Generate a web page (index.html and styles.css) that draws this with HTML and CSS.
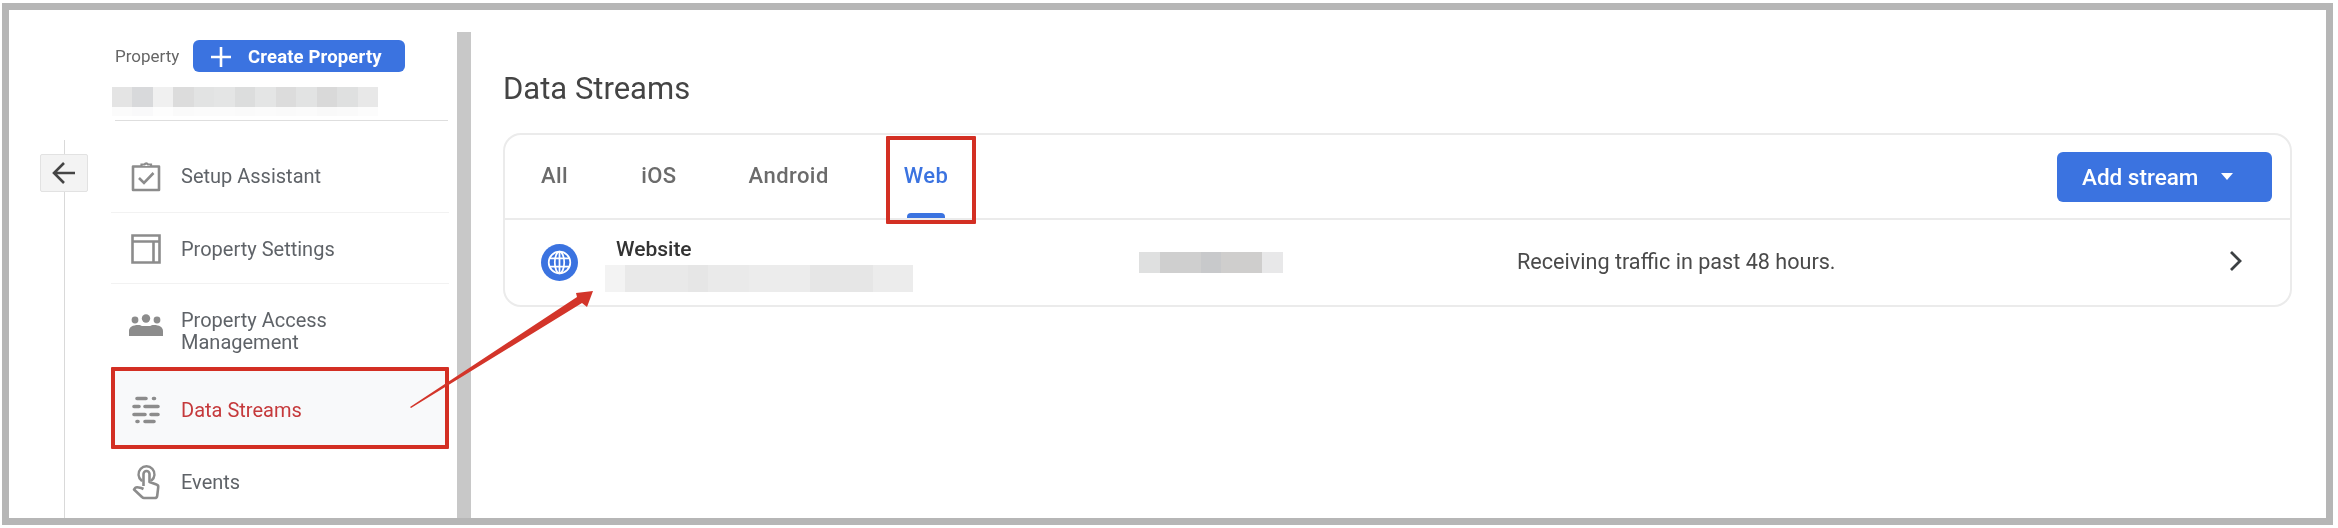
FILE: index.html
```html
<!DOCTYPE html>
<html lang="en">
<head>
<meta charset="utf-8">
<title>Data Streams</title>
<link rel="stylesheet" href="styles.css">
</head>
<body>
<div class="frame">
  <div class="rail">
    <div class="rail-line rail-line-top"></div>
    <button class="back" aria-label="Back">
      <svg viewBox="0 0 26 26" width="26" height="26"><path d="M24 13H3M13 3 3 13l10 10" fill="none" stroke="#444" stroke-width="2.6"/></svg>
    </button>
    <div class="rail-line rail-line-rest"></div>
  </div>
  <aside class="sidebar">
    <div class="prop-head">
      <span class="prop-label">Property</span>
      <button class="create">
        <svg viewBox="0 0 20 20" width="20" height="20"><path d="M10 0v20M0 10h20" stroke="#fff" stroke-width="2.6"/></svg>
        <span>Create Property</span>
      </button>
    </div>
    <div class="mosaic-name"></div>
    <div class="prop-rule"></div>
    <nav class="nav">
      <a class="row row-setup">
        <span class="ico"><svg viewBox="0 0 30 32" width="30" height="32"><path d="M2 6.5h26v23.500H2z" fill="none" stroke="#8c8c8c" stroke-width="2.600" stroke-linejoin="round"/><path d="M10.500 6V4.500h3a2 2 0 0 1 3.500 0h3V6" fill="#fff" stroke="#8c8c8c" stroke-width="2.200"/><path d="m8 18 5 5 9.500-10" fill="none" stroke="#8c8c8c" stroke-width="2.600"/></svg></span>
        <span class="label">Setup Assistant</span>
      </a>
      <a class="row row-settings">
        <span class="ico"><svg viewBox="0 0 30 30" width="30" height="30"><path d="M1.500 1.500h27v27h-27zM1.500 7.500h27M22.500 7.500v21" fill="none" stroke="#8c8c8c" stroke-width="2.600"/></svg></span>
        <span class="label">Property Settings</span>
      </a>
      <a class="row row-access">
        <span class="ico"><svg viewBox="0 0 36 24" width="36" height="24"><circle cx="7" cy="7" r="3.400" fill="#8c8c8c"/><circle cx="18" cy="5.500" r="4.200" fill="#8c8c8c"/><circle cx="29" cy="7" r="3.400" fill="#8c8c8c"/><path d="M1 23v-5c0-4 4-6 9-6 2 0 3 .5 4 1h8c1-.5 2-1 4-1 5 0 9 2 9 6v5z" fill="#8c8c8c"/></svg></span>
        <span class="label">Property Access<br>Management</span>
      </a>
      <a class="row row-streams">
        <span class="ico"><svg viewBox="0 0 30 30" width="30" height="30"><path d="M6 3.500h9M22.500 3.500h1M3 11.500h5M14 11.500h13M3 19.500h11M20 19.500h7M6 26.500h1M14 26.500h9" fill="none" stroke="#8c8c8c" stroke-width="3.600" stroke-linecap="round"/></svg></span>
        <span class="label">Data Streams</span>
      </a>
      <a class="row row-events">
        <span class="ico"><svg viewBox="0 0 30 36" width="30" height="36"><path d="M10.500 16.500a8 8 0 1 1 10 0" fill="none" stroke="#8c8c8c" stroke-width="2.400" stroke-linecap="round"/><path d="M12.500 22V10a3 3 0 0 1 6 0v8l7 2.500a2.500 2.500 0 0 1 1.700 2.800l-1 8.500a2.500 2.500 0 0 1-2.500 2.200H13a2.500 2.500 0 0 1-1.800-.8L3 25.500l1.500-1.800c1-.8 5-.2 8 1.300" fill="none" stroke="#8c8c8c" stroke-width="2.600" stroke-linejoin="round"/></svg></span>
        <span class="label">Events</span>
      </a>
    </nav>
  </aside>
  <div class="scrollbar"></div>
  <main class="main">
    <h1 class="title">Data Streams</h1>
    <section class="card">
      <header class="card-head">
        <div class="tabs">
          <a class="tab tab-all">All</a>
          <a class="tab tab-ios">iOS</a>
          <a class="tab tab-android">Android</a>
          <a class="tab tab-web">Web</a>
        </div>
        <button class="add">
          <span>Add stream</span>
          <svg viewBox="0 0 12 7" width="12" height="7"><path d="M0 0h12L6 7z" fill="#fff"/></svg>
        </button>
      </header>
      <div class="stream">
        <span class="globe">
          <svg viewBox="0 0 36 36" width="37" height="37"><circle cx="18" cy="18" r="18" fill="#3b73e0"/><g fill="none" stroke="#fff" stroke-width="1.700"><circle cx="18" cy="18" r="10.500"/><ellipse cx="18" cy="18" rx="4.600" ry="10.500"/><path d="M8.500 14h19M8.500 22h19M18 7.500v21"/></g></svg>
        </span>
        <div class="stream-name">
          <div class="stream-title">Website</div>
          <div class="mosaic-url"></div>
        </div>
        <div class="mosaic-id"></div>
        <div class="status">Receiving traffic in past 48 hours.</div>
        <svg class="chev" viewBox="0 0 14 22" width="14" height="22"><path d="m2 2 9 9-9 9" fill="none" stroke="#3c4043" stroke-width="2.800"/></svg>
      </div>
    </section>
  </main>
  <svg class="arrow" viewBox="400 285 200 130" width="200" height="130">
    <path d="M410 407 577 297l-1-4 17-2-6 16-5-4L411 408z" fill="#d3352a"/>
  </svg>
</div>
</body>
</html>
```

FILE: styles.css
```css
* { box-sizing: border-box; }

html, body {
  margin: 0;
  height: 100%;
  background: #fff;
}

body {
  font-family: Roboto, "Liberation Sans", sans-serif;
  color: #5f6368;
  overflow: hidden;
}

.frame {
  position: relative;
  display: flex;
  width: 2331px;
  height: 522px;
  margin: 3px 0 0 2px;
  border: 7px solid #b6b6b6;
  background: #fff;
  filter: blur(0.45px);
}

/* left rail */
.rail {
  flex: none;
  width: 102px;
  display: flex;
  flex-direction: column;
  padding-left: 31px;
}

.rail-line {
  width: 1px;
  margin-left: 24px;
  background: #d9d9d9;
}

.rail-line-top { height: 14px; margin-top: 130px; }
.rail-line-rest { flex: 1; }

.back {
  flex: none;
  width: 48px;
  height: 38px;
  padding: 0;
  display: flex;
  align-items: center;
  justify-content: center;
  background: #f3f3f3;
  border: 1px solid #e2e2e2;
  border-radius: 2px;
}

/* sidebar */
.sidebar {
  flex: none;
  width: 346px;
  display: flex;
  flex-direction: column;
}

.prop-head {
  display: flex;
  align-items: center;
  gap: 15px;
  margin: 30px 0 0 4px;
}

.prop-label {
  font-size: 17px;
  color: #666;
  width: 63px;
}

.create {
  width: 212px;
  height: 32px;
  display: flex;
  align-items: center;
  gap: 17px;
  padding: 1px 0 0 18px;
  background: #3b73e0;
  border: 0;
  border-radius: 6px;
  color: #fff;
  font: 700 18.500px Roboto, sans-serif;
  letter-spacing: .15px;
}

.mosaic-name {
  width: 266px;
  height: 30px;
  margin: 15px 0 0 1px;
  background:
    linear-gradient(#fff0 20px, #ffffffd9 20px),
    linear-gradient(90deg,
      #e4e4e4 0 20px, #d8d9db 20px 41px, #f0f0f0 41px 61px, #dcdcdc 61px 82px,
      #e2e3e3 82px 102px, #e4e5e5 102px 123px, #dcdddd 123px 143px, #e4e5e5 143px 164px,
      #dcdcdc 164px 184px, #e2e3e3 184px 205px, #d9d9d9 205px 225px, #dfe0e0 225px 246px,
      #e8e8e8 246px);
}

.prop-rule {
  width: 333px;
  height: 1px;
  margin: 4px 0 0 4px;
  background: #dedede;
}

.nav {
  display: flex;
  flex-direction: column;
  margin-top: 17px;
}

.row {
  display: flex;
  align-items: center;
  gap: 20px;
  padding-left: 20px;
  width: 338px;
  font-size: 20px;
  line-height: 22px;
  color: #5f6368;
}

.row-setup, .row-settings {
  border-bottom: 1px solid #f2f2f2;
  padding-top: 2px;
}

.row-setup { height: 75px; }
.row-settings { height: 71px; }
.row-access { height: 83px; }
.row-access .label { margin-top: 10px; }
.row-access .ico { margin-top: -2px; }
.row-events { height: 69px; padding-bottom: 3px; }

.row-streams {
  height: 82px;
  padding-left: 16px;
  padding-top: 4px;
  border: 4px solid #d32f23;
  border-radius: 1px;
  background: #f8f9fa;
  color: #c5393b;
}

.ico {
  flex: none;
  width: 30px;
  height: 30px;
  display: flex;
  align-items: center;
  justify-content: center;
}

.ico svg { flex: none; }

/* scrollbar */
.scrollbar {
  flex: none;
  width: 14px;
  margin-top: 22px;
  background: #c8c8c8;
}

/* main */
.main {
  flex: 1;
  min-width: 0;
  padding: 0 34px 0 32px;
}

.title {
  margin: 62px 0 27px;
  font-size: 31px;
  line-height: 34px;
  font-weight: 400;
  color: #444;
}

.card {
  height: 174px;
  border: 2px solid #ebebeb;
  border-radius: 18px;
  display: flex;
  flex-direction: column;
}

.card-head {
  flex: none;
  height: 85px;
  display: flex;
  align-items: center;
  justify-content: space-between;
  padding-right: 18px;
  border-bottom: 2px solid #ebebeb;
}

.tabs {
  display: flex;
  align-self: stretch;
  padding-left: 36px;
}

.tab {
  position: relative;
  font-size: 22px;
  font-weight: 500;
  letter-spacing: .45px;
  line-height: 82px;
  color: #6b6b6b;
}

.tab-ios { margin-left: 73px; }
.tab-android { margin-left: 72px; }
.tab-web { margin-left: 75px; color: #3b73e0; }

.tab-web::before {
  content: "";
  position: absolute;
  left: 3px;
  right: 3px;
  bottom: 0;
  height: 5px;
  background: #3b73e0;
  border-radius: 4px 4px 0 0;
}

.tab-web::after {
  content: "";
  position: absolute;
  top: 1px;
  bottom: -6px;
  left: -18px;
  right: -28px;
  border: 4px solid #d32f23;
  border-radius: 1px;
}

.add {
  width: 215px;
  height: 50px;
  display: flex;
  align-items: center;
  gap: 23px;
  padding: 0 0 0 25px;
  background: #3b73e0;
  border: 0;
  border-radius: 6px;
  color: #fff;
  font: 500 22.500px Roboto, sans-serif;
}

.stream {
  flex: 1;
  display: flex;
  align-items: center;
  padding-left: 36px;
  position: relative;
}

.globe {
  flex: none;
  width: 37px;
  height: 37px;
}

.stream-name {
  flex: none;
  width: 534px;
  margin-left: 27px;
  align-self: flex-start;
}

.stream-title {
  margin: 17px 0 0 11px;
  font-size: 21px;
  line-height: 24px;
  font-weight: 500;
  color: #333;
}

.mosaic-url {
  width: 308px;
  height: 27px;
  margin-top: 4px;
  background:
    linear-gradient(90deg, #f3f3f3 0 20px, #e9e9e9 20px 83px, #e6e6e6 83px 103px, #eaeaea 103px 144px, #ececec 144px 205px, #e6e6e6 205px 268px, #ececec 268px);
}

.mosaic-id {
  flex: none;
  width: 144px;
  height: 21px;
  background: linear-gradient(90deg, #dfe0e0 0 21px, #cfcfcf 21px 62px, #c8c9cb 62px 82px, #cfcecd 82px 123px, #e8e8e9 123px);
}

.status {
  margin-left: 234px;
  margin-top: -2px;
  font-size: 21.600px;
  color: #4a4a4a;
  white-space: nowrap;
}

.chev {
  position: absolute;
  right: 47px;
  top: 30px;
}

/* annotation arrow */
.arrow {
  position: absolute;
  left: 391px;
  top: 275px;
}
```
